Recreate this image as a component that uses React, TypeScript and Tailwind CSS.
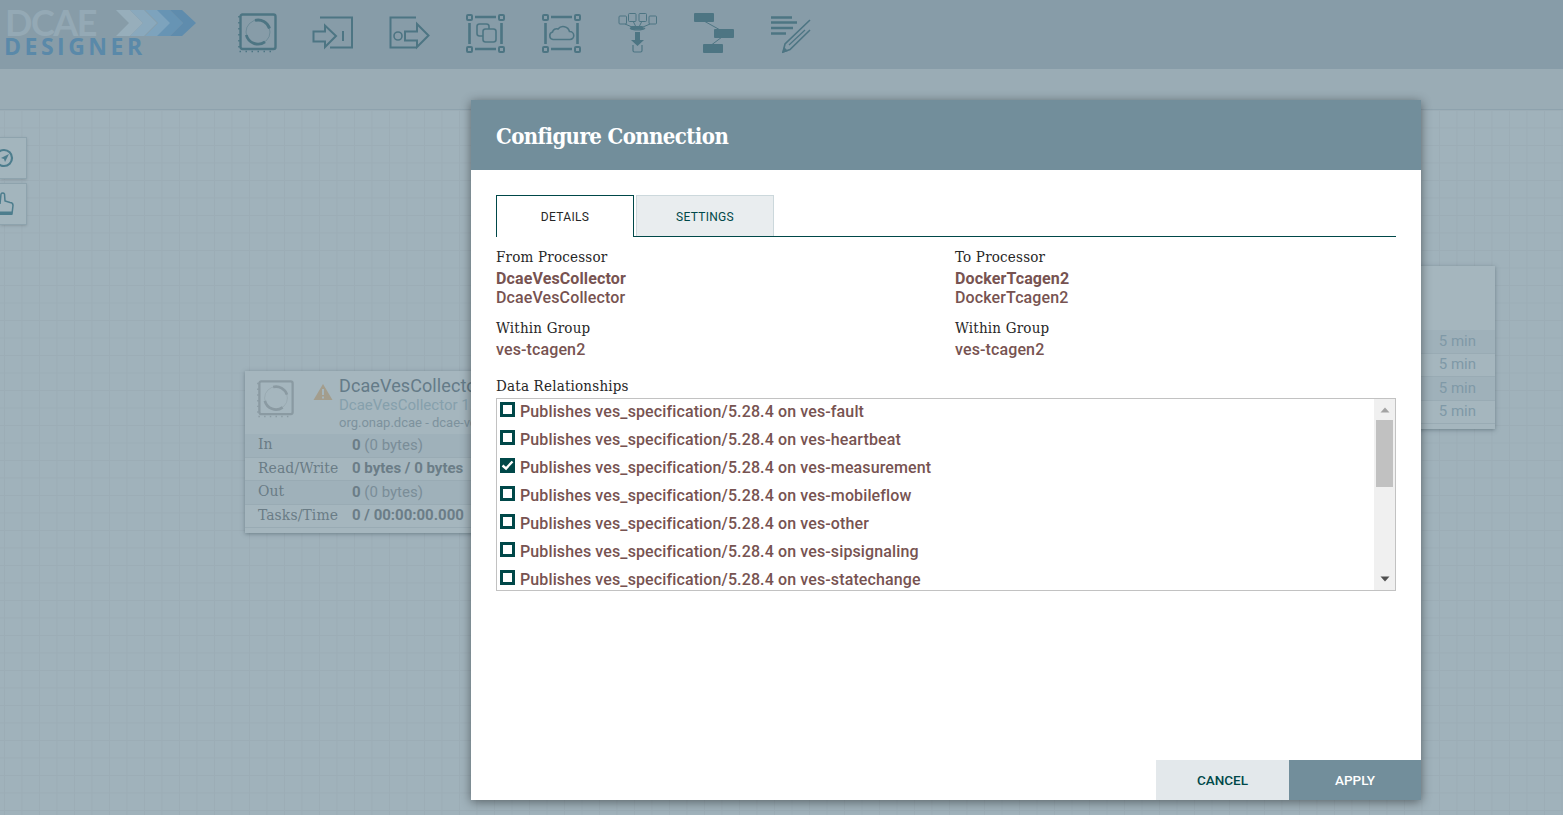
import type { ReactNode } from 'react';

const slab = "[font-family:'DejaVu_Serif_Condensed','DejaVu_Serif',serif]";
const ICON = '#4d7583';

function ToolIcon({ children }: { children: ReactNode }) {
  return (
    <svg width="40" height="40" viewBox="0 0 40 40" fill="none" className="shrink-0 overflow-visible">
      {children}
    </svg>
  );
}

function ProcessorGlyph({ color, size = 40 }: { color: string; size?: number }) {
  return (
    <svg width={size} height={size} viewBox="0 0 40 40" fill="none" className="shrink-0">
      <rect x="2.500" y="1.500" width="35" height="34.500" rx="2" stroke={color} strokeWidth="2.400" />
      <path d="M1 3V38.500H34" stroke={color} strokeWidth="1.600" strokeDasharray="1.500 4.500" />
      <circle cx="20" cy="19" r="12" stroke={color} strokeWidth="1" strokeOpacity="0.45" />
      <path d="M17 7.400A12 12 0 0 1 31.500 15.500" stroke={color} strokeWidth="2.800" />
      <path d="M8.300 22A12 12 0 0 0 27 28.800" stroke={color} strokeWidth="2.800" />
    </svg>
  );
}

function CornerFrame({ children }: { children: ReactNode }) {
  return (
    <ToolIcon>
      <g stroke={ICON} strokeWidth="2">
        <rect x="1" y="2" width="5" height="5" rx="1" />
        <rect x="33" y="2" width="5" height="5" rx="1" />
        <rect x="1" y="34" width="5" height="5" rx="1" />
        <rect x="33" y="34" width="5" height="5" rx="1" />
        <path d="M9 4H30M9 36H30" strokeWidth="2.600" />
        <path d="M3.500 10V31M35.500 10V31" strokeWidth="2.600" />
      </g>
      {children}
    </ToolIcon>
  );
}

function Toolbar() {
  return (
    <div className="flex gap-[36px] pt-[13px]">
      <ProcessorGlyph color={ICON} />
      <ToolIcon>
        <path d="M6 4.500H38V34.500H16" stroke={ICON} strokeWidth="2" />
        <path d="M-0.500 18.500H11V12.500L22 23L11 34V28.500H-0.500Z" fill="#879ca8" stroke={ICON} strokeWidth="2" />
        <path d="M29 18V28" stroke={ICON} strokeWidth="2" />
      </ToolIcon>
      <ToolIcon>
        <path d="M26 4.500H0.500V34.500H26" stroke={ICON} strokeWidth="2" />
        <circle cx="8" cy="23" r="4" stroke={ICON} strokeWidth="1.600" />
        <path d="M15 18.500H27V11L38.500 22.500L27 34V27.500H15Z" fill="#879ca8" stroke={ICON} strokeWidth="2" />
      </ToolIcon>
      <CornerFrame>
        <rect x="11" y="11" width="12" height="12" rx="2.500" stroke={ICON} strokeWidth="1.600" />
        <rect x="17" y="16" width="13" height="13" rx="2.500" fill="#879ca8" stroke={ICON} strokeWidth="1.600" />
      </CornerFrame>
      <CornerFrame>
        <path
          d="M11 26.500a3.800 3.800 0 0 1-.5-7.400a4 4 0 0 1 5.500-3a6.500 6.500 0 0 1 11.500 2.400a4 4 0 0 1 .5 8Z"
          stroke={ICON}
          strokeWidth="1.600"
        />
      </CornerFrame>
      <ToolIcon>
        <g stroke={ICON} strokeWidth="1">
          <rect x="1" y="3" width="7.500" height="8" rx="1" />
          <rect x="10.500" y="0.500" width="7.500" height="8" rx="1" />
          <rect x="21" y="0.500" width="7.500" height="8" rx="1" />
          <rect x="31" y="3" width="7.500" height="8" rx="1" />
          <path d="M7 11L14 14M15 8L17.500 13M24 8L21.500 13M32 11L25 14" />
        </g>
        <rect x="12.500" y="13" width="13" height="3.500" rx="1.500" fill={ICON} />
        <path d="M12 15a8 3 0 0 0 15 0" stroke={ICON} strokeWidth="1.200" />
        <path d="M17 19H22V27H26L19.500 33L13 27H17Z" fill={ICON} />
        <path d="M15 32V37.500a1.500 1.500 0 0 0 1.500 1.500H22.500a1.500 1.500 0 0 0 1.500-1.500V32" stroke={ICON} strokeWidth="1.200" />
      </ToolIcon>
      <ToolIcon>
        <path d="M10 8L28 18M28 24L16 33" stroke={ICON} strokeWidth="1" />
        <rect x="0" y="0" width="20" height="9" rx="1" fill={ICON} />
        <rect x="20" y="16" width="20" height="9" rx="1" fill={ICON} />
        <rect x="9" y="31" width="20" height="9" rx="1" fill={ICON} />
      </ToolIcon>
      <ToolIcon>
        <path d="M1 4.500H22M1 9.500H27M1 15H23M1 20.500H16" stroke={ICON} strokeWidth="2.400" />
        <path d="M40 7L15 31L13 39L20 36.500L40 17" stroke={ICON} strokeWidth="1.600" />
        <path d="M35 17L19 32" stroke={ICON} strokeWidth="1.200" />
        <path d="M12 40L14 34L18 38Z" fill={ICON} />
      </ToolIcon>
    </div>
  );
}

function Logo() {
  return (
    <div className="w-[238px] shrink-0 pl-[3px] pt-[9px] [font-family:'Open_Sans',sans-serif]">
      <div className="flex items-start">
        <div className="w-[113px] pl-[2px] text-[36px] font-bold leading-[26px] tracking-[-1.500px] text-[#94a9b5] [font-family:'Lato',sans-serif]">
          DCAE
        </div>
        <svg width="80" height="26" viewBox="0 0 80 26" className="mt-px shrink-0">
          <path d="M0 0H14L27 13L14 26H0L13 13Z" fill="#97aebb" />
          <path d="M14 0H28L41 13L28 26H14L27 13Z" fill="#8aa9bd" />
          <path d="M29 0H43L56 13L43 26H29L42 13Z" fill="#7da3bd" />
          <path d="M41 0H54L67 13L54 26H41L54 13Z" fill="#6794b4" />
          <path d="M54 0H66L80 13L66 26H54L67 13Z" fill="#5f8cad" />
        </svg>
      </div>
      <div className="ml-px text-[23px] font-bold leading-[20px] tracking-[3.500px] text-[#5a89a9]">DESIGNER</div>
    </div>
  );
}

function StatRow({ label, dark, children }: { label: string; dark?: boolean; children: ReactNode }) {
  return (
    <div
      className={`flex h-[23.500px] items-center border-b border-[#99abb4] pb-px pl-[13px] text-[15px] ${dark ? 'bg-[#9fb1ba]' : ''}`}
    >
      <span className={`w-[94px] shrink-0 whitespace-nowrap text-[15.500px] tracking-[0.100px] text-[#6a7c86] ${slab}`}>{label}</span>
      <span className="whitespace-nowrap text-[#6b7d87]">{children}</span>
    </div>
  );
}

function MinRow({ dark }: { dark?: boolean }) {
  return (
    <div
      className={`flex h-[23.500px] items-center justify-end border-b border-[#99abb4] pb-px pr-[19px] text-[15px] text-[#7f99a7] ${dark ? 'bg-[#9fb1ba]' : ''}`}
    >
      5 min
    </div>
  );
}

function Canvas() {
  return (
    <div className="relative flex-1 overflow-hidden bg-[#a0b2bb] bg-[linear-gradient(#9cadb6_1px,transparent_1px),linear-gradient(90deg,#9cadb6_1px,transparent_1px)] bg-[size:17.500px_17.500px] bg-[position:4px_0px]">
      {/* graph palette */}
      <div className="absolute left-0 top-[27px] flex w-[27px] flex-col gap-[4px]">
        <div className="flex h-[42px] items-center border border-l-0 border-[#8ea3ad] bg-[#a3b5bd] shadow-sm">
          <svg width="14" height="20" viewBox="0 0 14 20" fill="none">
            <circle cx="4" cy="10" r="8" stroke="#4d7d8d" strokeWidth="2.200" />
            <path d="M9 6L1 10L4 11L5 14Z" fill="#4d7d8d" />
          </svg>
        </div>
        <div className="flex h-[42px] items-center border border-l-0 border-[#8ea3ad] bg-[#a3b5bd] shadow-sm">
          <svg width="14" height="24" viewBox="0 0 14 24" fill="none">
            <path
              d="M0 12L1 2a2 2 0 0 1 3.500 0L5 9L10 10.500a3 3 0 0 1 3 3L12 22H0"
              stroke="#4d7d8d"
              strokeWidth="1.500"
            />
            <path d="M0 19.500H12V23H0Z" fill="#4d7d8d" />
          </svg>
        </div>
      </div>

      {/* processor on the left */}
      <div className="absolute left-[245px] top-[261px] h-[162px] w-[350px] bg-[#a5b6be] shadow-[0_1px_4px_rgba(60,80,90,0.5)]">
        <div className="flex h-[63px]">
          <div className="pl-[12px] pt-[9px]">
            <ProcessorGlyph color="#8a9aa2" size={38} />
          </div>
          <svg width="20" height="18" viewBox="0 0 20 18" className="ml-[18px] mt-[12px] shrink-0">
            <path d="M10 1L19.500 17H0.500Z" fill="#a39d8d" />
            <path d="M9 6H11V12H9ZM9 13.500H11V15.500H9Z" fill="#a5b6be" />
          </svg>
          <div className="ml-[6px] whitespace-nowrap pt-[4px]">
            <div className="text-[18px] leading-[22px] tracking-[0.100px] text-[#647b88]">DcaeVesCollector</div>
            <div className="text-[15px] leading-[16px] text-[#86a0ac]">DcaeVesCollector 1.0</div>
            <div className="mt-[2px] text-[13px] leading-[16px] text-[#7d929d]">org.onap.dcae - dcae-ves</div>
          </div>
        </div>
        <StatRow label="In" dark>
          <b className="font-bold">0</b> <span className="text-[#7a8d98]">(0 bytes)</span>
        </StatRow>
        <StatRow label="Read/Write">
          <b className="font-bold">0 bytes / 0 bytes</b>
        </StatRow>
        <StatRow label="Out" dark>
          <b className="font-bold">0</b> <span className="text-[#7a8d98]">(0 bytes)</span>
        </StatRow>
        <StatRow label="Tasks/Time">
          <b className="font-bold">0 / 00:00:00.000</b>
        </StatRow>
      </div>

      {/* processor on the right */}
      <div className="absolute left-[1145px] top-[156px] h-[163px] w-[350px] bg-[#a5b6be] pt-[64px] shadow-[0_1px_4px_rgba(60,80,90,0.5)]">
        <MinRow dark />
        <MinRow />
        <MinRow dark />
        <MinRow />
      </div>
    </div>
  );
}

function Relationship({ name, checked }: { name: string; checked?: boolean }) {
  return (
    <div className="flex h-[28px] items-start pl-[3px] pt-[3px]">
      {checked ? (
        <div className="flex h-[15px] w-[15px] shrink-0 items-center justify-center bg-[#004849]">
          <svg width="13" height="11" viewBox="0 0 13 11" fill="none">
            <path d="M1.500 5.500L5 8.500L11.500 1.500" stroke="#fff" strokeWidth="2.400" />
          </svg>
        </div>
      ) : (
        <div className="h-[15px] w-[15px] shrink-0 border-[3px] border-[#004849] bg-white" />
      )}
      <span className="ml-[5px] mt-px whitespace-nowrap text-[16px] font-medium leading-[18px] tracking-[0.120px] text-[#775351]">
        Publishes ves_specification/5.28.4 on {name}
      </span>
    </div>
  );
}

function ProcessorColumn({ heading, name }: { heading: string; name: string }) {
  return (
    <div className="tracking-[0.120px]">
      <div className={`text-[15px] leading-[20px] tracking-[0.200px] text-[#262626] ${slab}`}>{heading}</div>
      <div className="mt-[2px] text-[16px] font-bold leading-[19px] text-[#775351]">{name}</div>
      <div className="text-[16px] font-medium leading-[19px] text-[#775351]">{name}</div>
      <div className={`mt-[11px] text-[15px] leading-[20px] tracking-[0.200px] text-[#262626] ${slab}`}>Within Group</div>
      <div className="mt-[2px] text-[16px] font-medium leading-[20px] text-[#775351]">ves-tcagen2</div>
    </div>
  );
}

function ConfigureDialog() {
  return (
    <div className="absolute left-[471px] top-[100px] flex h-[700px] w-[950px] flex-col bg-white shadow-[0_2px_10px_rgba(0,0,0,0.45)]">
      <div className={`flex h-[70px] shrink-0 items-center bg-[#728e9b] pl-[25px] pt-[3px] text-[22px] font-bold tracking-[-0.600px] text-white ${slab}`}>
        Configure Connection
      </div>
      <div className="flex-1 px-[25px] pt-[25px]">
        <div className="flex h-[42px] border-b border-[#004849] text-[12px] uppercase tracking-[0.300px]">
          <div className="flex h-[42px] w-[138px] items-center justify-center border border-b-0 border-[#004849] bg-white text-[#262626]">
            Details
          </div>
          <div className="ml-[2px] flex h-[41px] w-[138px] items-center justify-center border border-b-0 border-[#ccd8dc] bg-[#e9edef] pt-px text-[#004849]">
            Settings
          </div>
        </div>
        <div className="mt-[10px] grid grid-cols-2 gap-x-[18px]">
          <ProcessorColumn heading="From Processor" name="DcaeVesCollector" />
          <ProcessorColumn heading="To Processor" name="DockerTcagen2" />
        </div>
        <div className={`mt-[16px] text-[15px] leading-[20px] tracking-[0.200px] text-[#262626] ${slab}`}>Data Relationships</div>
        <div className="mt-[2px] flex h-[193px] overflow-hidden border border-[#c2c2c2]">
          <div className="min-w-0 flex-1 overflow-hidden">
            <Relationship name="ves-fault" />
            <Relationship name="ves-heartbeat" />
            <Relationship name="ves-measurement" checked />
            <Relationship name="ves-mobileflow" />
            <Relationship name="ves-other" />
            <Relationship name="ves-sipsignaling" />
            <Relationship name="ves-statechange" />
          </div>
          <div className="flex w-[21px] shrink-0 flex-col items-center bg-[#f0f0f0] pt-[8px]">
            <svg width="10" height="6" viewBox="0 0 10 6">
              <path d="M0.500 5.500H9.500L5 0.500Z" fill="#a3a3a3" />
            </svg>
            <div className="mt-[7px] h-[67px] w-[17px] bg-[#c1c1c1]" />
            <svg width="10" height="6" viewBox="0 0 10 6" className="mt-auto mb-[8px]">
              <path d="M0.500 0.500H9.500L5 5.500Z" fill="#505050" />
            </svg>
          </div>
        </div>
      </div>
      <div className="flex h-[40px] shrink-0 justify-end text-[13.500px] font-medium uppercase">
        <div className="flex w-[133px] items-center justify-center bg-[#e3e8eb] text-[#004849]">Cancel</div>
        <div className="flex w-[132px] items-center justify-center bg-[#728e9b] text-white">Apply</div>
      </div>
    </div>
  );
}

export default function App() {
  return (
    <div className="relative flex h-[815px] w-full flex-col overflow-hidden font-['Roboto',sans-serif]">
      <header className="flex h-[69px] shrink-0 bg-[#879ca8]">
        <Logo />
        <Toolbar />
      </header>
      <div className="h-[41px] shrink-0 border-b border-[#8ea2ad] bg-[#9aacb5]" />
      <Canvas />
      <ConfigureDialog />
    </div>
  );
}
